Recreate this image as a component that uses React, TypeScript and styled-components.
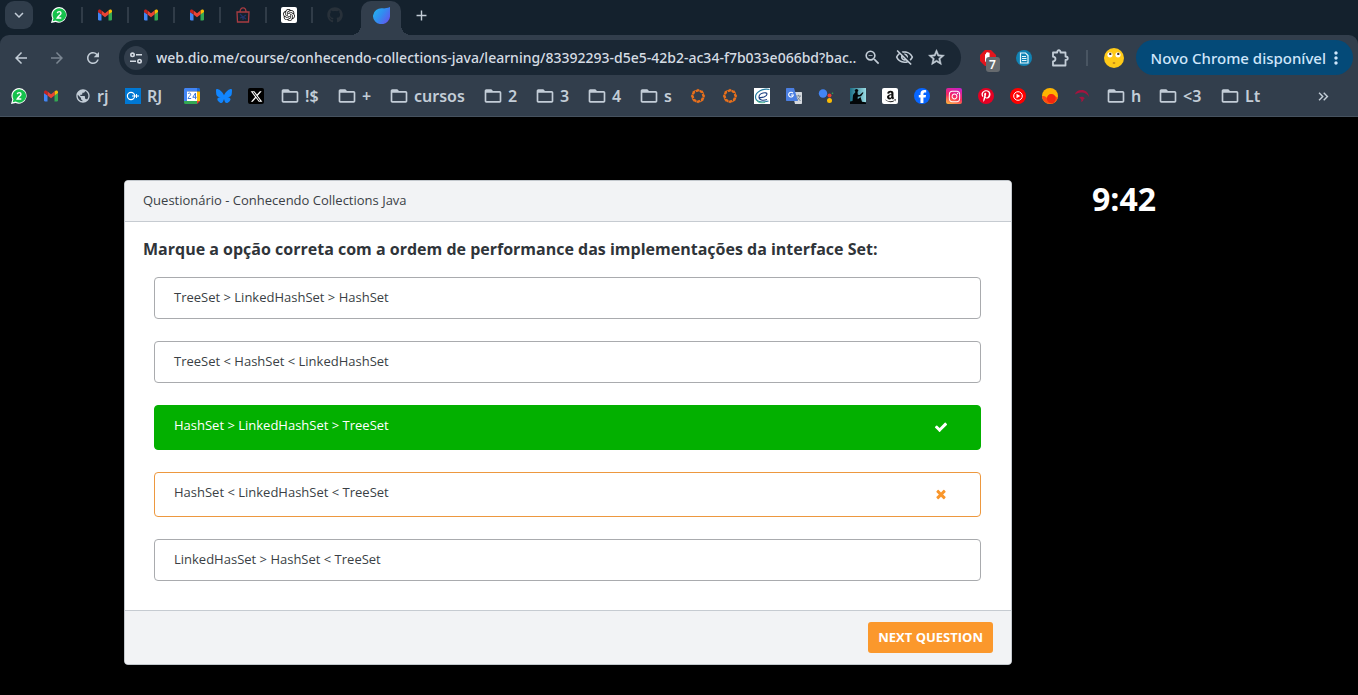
import React from 'react';
import styled, { createGlobalStyle, css } from 'styled-components';
import {
  MdArrowBack, MdArrowForward, MdRefresh, MdZoomOut, MdOutlineVisibilityOff, MdStarOutline,
  MdMoreVert, MdPublic, MdExpandMore, MdFolderOpen, MdAdd, MdKeyboardDoubleArrowRight,
} from 'react-icons/md';
import { FaXTwitter, FaBluesky, FaFacebookF, FaInstagram, FaPinterestP, FaAmazon, FaGithub } from 'react-icons/fa6';
import { SiOpenai } from 'react-icons/si';

const uiFont = `"Noto Sans", "Open Sans", sans-serif`;
const pageFont = `"Open Sans", "Noto Sans", sans-serif`;

const GlobalStyle = createGlobalStyle`
  * { box-sizing: border-box; }
  html, body { margin: 0; background: #000; }
  button, input { font: inherit; color: inherit; }
  svg { display: block; flex: none; }
`;

const Window = styled.div`
  min-height: 100vh;
  background: #000;
`;

/* ---------- browser frame ---------- */

const Browser = styled.header`
  background: #14212d;
  color: #c3cdd7;
  font-family: ${uiFont};
`;

const TabStrip = styled.nav`
  display: flex;
  height: 35px;
  padding: 1px 5px 0;
`;

const plain = css`
  border: 0;
  padding: 0;
  margin: 0;
  background: none;
  display: flex;
  align-items: center;
  justify-content: center;
  cursor: pointer;
`;

const TabSearch = styled.button`
  ${plain}
  width: 28px;
  height: 28px;
  margin-right: 3px;
  border-radius: 9px;
  background: #303d4b;
`;

const Tab = styled.button<{ $last?: boolean }>`
  ${plain}
  width: 46px;
  height: 28px;
  &::after {
    content: '';
    width: 2px;
    height: 16px;
    margin-left: 14px;
    margin-right: -1px;
    background: ${(p) => (p.$last ? 'transparent' : '#303c48')};
  }
  padding-left: 15px;
`;

const ActiveTab = styled.button`
  ${plain}
  position: relative;
  width: 40px;
  height: 34px;
  margin: 0 6px 0 3px;
  padding-bottom: 6px;
  border-radius: 10px 10px 0 0;
  background: #323e4c;
  &::before, &::after {
    content: '';
    position: absolute;
    bottom: 0;
    width: 10px;
    height: 10px;
  }
  &::before {
    right: 100%;
    background: radial-gradient(circle at 0 0, transparent 10px, #323e4c 10px);
  }
  &::after {
    left: 100%;
    background: radial-gradient(circle at 100% 0, transparent 10px, #323e4c 10px);
  }
`;

const NewTab = styled.button`
  ${plain}
  width: 28px;
  height: 28px;
`;

const Toolbar = styled.div`
  display: flex;
  align-items: center;
  height: 45px;
  padding: 0 5px 0 3px;
  background: #323e4c;
  border-radius: 9px 9px 0 0;
`;

const NavButton = styled.button<{ $dim?: boolean }>`
  ${plain}
  width: 36px;
  height: 34px;
  opacity: ${(p) => (p.$dim ? 0.5 : 1)};
`;

const AddressBar = styled.form`
  flex: 1;
  display: flex;
  align-items: center;
  height: 35px;
  margin: 0 9px 0 8px;
  padding: 0 8px 0 5px;
  border-radius: 18px;
  background: #1a2734;
`;

const SiteInfo = styled.button`
  ${plain}
  width: 24px;
  height: 24px;
  border-radius: 50%;
  background: #323e4c;
`;

const Address = styled.input`
  flex: 1;
  min-width: 0;
  height: 28px;
  margin-left: 8px;
  padding: 0;
  border: 0;
  outline: 0;
  background: none;
  font-size: 14px;
  font-weight: 500;
  color: #d5dce3;
`;

const AddressButton = styled.button`
  ${plain}
  width: 32px;
  height: 32px;
`;

const Extension = styled.button`
  ${plain}
  position: relative;
  width: 36px;
  height: 34px;
`;

const Badge = styled.span`
  position: absolute;
  left: 16px;
  top: 16px;
  width: 14px;
  height: 15px;
  border-radius: 3px;
  background: #666a6e;
  color: #fff;
  font-size: 12px;
  font-weight: 600;
  line-height: 15px;
  text-align: center;
`;

const Divider = styled.span`
  width: 2px;
  height: 16px;
  margin: 0 8px;
  background: #495562;
`;

const UpdateButton = styled.button`
  ${plain}
  flex: none;
  height: 35px;
  padding: 0 7px 0 15px;
  margin-left: 4px;
  border-radius: 18px;
  background: #044a78;
  color: #cfe6fb;
  font-size: 15px;
  font-weight: 500;
  white-space: nowrap;
`;

const Bookmarks = styled.nav`
  display: flex;
  align-items: center;
  height: 37px;
  padding: 0 17px 4px 3px;
  background: #323e4c;
  border-bottom: 1px solid #46525f;
`;

const Bookmark = styled.a<{ $label?: number }>`
  flex: none;
  display: flex;
  align-items: center;
  width: ${(p) => 32 + (p.$label ?? 0)}px;
  padding-left: 8px;
  color: inherit;
  font-size: 16px;
  font-weight: 600;
  line-height: 24px;
  text-decoration: none;
  white-space: nowrap;
`;

const BookmarkLabel = styled.span`
  margin-left: 6px;
`;

const FolderSlot = styled.span`
  flex: none;
  display: flex;
  justify-content: center;
  width: 19px;
`;

const Overflow = styled.button`
  ${plain}
  width: 36px;
  height: 28px;
  margin-left: auto;
`;

const Tile = styled.span<{ $bg: string; $fg?: string; $round?: boolean }>`
  flex: none;
  display: flex;
  align-items: center;
  justify-content: center;
  width: 16px;
  height: 16px;
  border-radius: ${(p) => (p.$round ? '50%' : '2px')};
  background: ${(p) => p.$bg};
  color: ${(p) => p.$fg ?? '#fff'};
`;

const Svg = ({ size = 16, box = 16, children }: { size?: number; box?: number; children: React.ReactNode }) => (
  <svg width={size} height={size} viewBox={`0 0 ${box} ${box}`} fill="none" aria-hidden="true">{children}</svg>
);

const WhatsApp = () => (
  <Svg>
    <path d="M8.2 0A7.8 7.8 0 0 0 1.3 11.4L0 16l4.6-1.1A7.8 7.8 0 1 0 8.2 0Z" fill="#fff" />
    <path d="M8.2 1.2a6.7 6.7 0 0 0-5.7 10.1l-.8 3 3-.8A6.7 6.7 0 1 0 8.2 1.2Z" fill="#16c24c" />
    <path d="M6.3 6.1c.2-1 .9-1.5 1.9-1.5s1.8.6 1.8 1.6c0 1.5-2.2 2.5-3.7 4.8h4" stroke="#fff" strokeWidth="1.4" />
  </Svg>
);

const Gmail = () => (
  <Svg>
    <path d="M1 4v8.6c0 .5.4.9 1 .9h2.500V7.600L1 5Z" fill="#4285f4" />
    <path d="M11.500 7.600v5.900H14c.600 0 1-.4 1-.9V4.500Z" fill="#34a853" />
    <path d="M11.500 3.600v4L15 5V4c0-1.500-1.500-2-2.500-1.200Z" fill="#fbbc04" />
    <path d="M4.500 7.600v-4L8 6.200l3.500-2.600v4L8 10.200Z" fill="#ea4335" />
    <path d="M1 4v1l3.500 2.600v-4l-1-.8C2.500 2 1 2.600 1 4Z" fill="#c5221f" />
  </Svg>
);

const Bag = () => (
  <Svg>
    <path d="M2 5h12l-.5 10h-11Z" stroke="#a83c42" strokeWidth="1.300" />
    <path d="M5 5c0-5.500 6-5.500 6 0" stroke="#a83c42" strokeWidth="1.300" />
    <path d="m5 7 3 3 3-2M8 10v3M5 11l3-1 3 2" stroke="#203468" strokeWidth="1.200" />
  </Svg>
);

const DioLogo = () => (
  <Svg size={17}>
    <defs>
      <linearGradient id="dio" x1="0" y1="3" x2="15" y2="13" gradientUnits="userSpaceOnUse">
        <stop stopColor="#24b3ee" />
        <stop offset=".5" stopColor="#318df0" />
        <stop offset="1" stopColor="#6058ed" />
      </linearGradient>
    </defs>
    <path d="M16 0v8.500a8 7.500 0 1 1-7-7.300c1.800.3 3.500 0 7-1.200Z" fill="url(#dio)" />
  </Svg>
);

const Tune = () => (
  <Svg>
    <g stroke="#d4dbe3" strokeWidth="1.600">
      <circle cx="4.500" cy="4.800" r="1.700" />
      <path d="M8 4.800h6M2 11.200h6" />
      <circle cx="11.500" cy="11.200" r="1.700" />
    </g>
  </Svg>
);

const Puzzle = () => (
  <Svg size={20} box={20}>
    <path
      d="M3 4.500h4.200c-.3-3 3.600-3 3.300 0h5v4c3 0 3 3.500 0 3.500v5.500H3v-4.200c3.300-.2 3.300-4.400 0-4.600Z"
      stroke="currentColor"
      strokeWidth="1.800"
      strokeLinejoin="round"
    />
  </Svg>
);

const Outlook = () => (
  <Svg>
    <path d="M0 0h16v16H0Z" fill="#0078d4" />
    <circle cx="6" cy="8" r="3.600" stroke="#fff" strokeWidth="1.200" />
    <path d="M7 8h7M11.500 6v4" stroke="#fff" />
  </Svg>
);

const Calendar = () => (
  <Svg>
    <path d="M1.500 0H13v3.500H3.500V13H0V1.500C0 .6.600 0 1.500 0Z" fill="#4285f4" />
    <path d="M13 0h1.500c1 0 1.500.6 1.500 1.500v2h-3Z" fill="#1967d2" />
    <path d="M13 3.500h3V13h-3Z" fill="#fbbc04" />
    <path d="M0 13h13v3H1.500C.600 16 0 15.400 0 14.500Z" fill="#34a853" />
    <path d="M13 13h3l-3 3Z" fill="#ea4335" />
    <path d="M3 3.500h10V13H3Z" fill="#fff" />
    <path d="M4 6c.3-1.400 2.700-1.300 2.700.3C6.700 7.500 4.300 9 4 10.500h3.200M11.500 11.200V5L8.800 9.300h3.900" stroke="#3d78dc" />
  </Svg>
);

const blades = [0, 45, 90, 135, 180, 225, 270, 315];

const Aperture = () => (
  <Svg>
    <circle cx="8" cy="8" r="5.400" stroke="#e9701c" strokeWidth="2.400" />
    {blades.map((a) => (
      <g key={a} transform={`rotate(${a} 8 8)`}>
        <path d="M6.500 1.500 8 .8l1.500 1.400Z" fill="#e9701c" />
        <path d="M7.200 5 10 2.600" stroke="#323e4c" strokeWidth=".8" />
      </g>
    ))}
  </Svg>
);

const Swirl = () => (
  <Svg>
    <path d="M0 0h16v16H0Z" fill="#fff" />
    <path d="M15.500 1.500C9 0 1.500 4 1.500 9s6 6 13 4" stroke="#247ca0" strokeWidth="1.200" />
    <path d="M5 9.500c4 .5 8-1.500 8-3.500 0-2.500-8-1-8 3 0 3 4 4 8 2.500" stroke="#1d3f82" strokeWidth="1.100" />
    <path d="M2 12c2 3 6 3 9 2.500" stroke="#5bbd91" />
  </Svg>
);

const Translate = () => (
  <Svg>
    <path d="M6 4h9c.600 0 1 .4 1 1v10c0 .6-.4 1-1 1H9Z" fill="#d5d9de" />
    <path d="M1 0h7l4 13H1c-.6 0-1-.4-1-1V1c0-.6.400-1 1-1Z" fill="#4b7fe2" />
    <path d="M7 5.200A2.400 2.400 0 1 0 7.400 7H5" stroke="#fff" strokeWidth="1.100" />
    <path d="M10 8h5M12.500 6.800V8M14 8c-.5 2-2 3.500-3 4M11.500 9.500l3 3.500" stroke="#73818e" strokeWidth=".9" />
  </Svg>
);

const Assistant = () => (
  <Svg>
    <circle cx="5" cy="5.500" r="4.200" fill="#4285f4" />
    <circle cx="11.500" cy="7.500" r="2" fill="#ea4335" />
    <circle cx="11.500" cy="12.500" r="2.500" fill="#fbbc04" />
    <circle cx="14.500" cy="5.200" r=".8" fill="#34a853" />
  </Svg>
);

const Kindle = () => (
  <Svg>
    <defs>
      <linearGradient id="sky" x1="0" y1="0" x2="1" y2="0">
        <stop stopColor="#1c6f85" />
        <stop offset="1" stopColor="#9adce4" />
      </linearGradient>
    </defs>
    <path d="M0 0h16v16H0Z" fill="url(#sky)" />
    <circle cx="6.500" cy="2.600" r="1.700" fill="#020608" />
    <path d="M5.500 4 3 7l-.5 6L0 13.500V16h16v-1.800l-4-.4-1.500-4.800-2.800 2.200V8.800l3.300-.6 2.500-3.400-.8-.6L9.700 7 7.800 6.800 7.500 4Z" fill="#020608" />
  </Svg>
);

const YouTubeMusic = () => (
  <Svg>
    <circle cx="8" cy="8" r="8" fill="#f00" />
    <circle cx="8" cy="8" r="4.300" stroke="#fff" strokeWidth="1" />
    <path d="M6.500 5.700v4.600L10.300 8Z" fill="#fff" />
  </Svg>
);

const Sunset = () => (
  <Svg>
    <circle cx="8" cy="8" r="8" fill="#ffb400" />
    <path d="M0 8c3-.5 4 .8 5 2 1-5 6-5 8-2l2.700 2A8 8 0 0 1 0 8Z" fill="#ff4a12" />
    <path d="M5 10c1-5 6-5 8-2 1.500 2.500 0 6-2 7.400C7.500 16 4.500 13 5 10Z" fill="#f5260e" />
  </Svg>
);

const Arc = () => (
  <Svg>
    <path d="M1 6.500C1.500 3.500 4 2 7.500 2c4 0 7 2.500 7.500 7-2-3.500-5-5-8-4.500C4.500 4.600 3 5.500 1 6.500Z" fill="#a4143e" />
    <path d="M5 9.500c2-1.500 5-1 6 1-1 0-1.500.5-2 2.500l-2 1c1-1.500.5-3.500-2-4.500Z" fill="#a4143e" />
  </Svg>
);

const BlockHand = () => (
  <Svg>
    <path d="M5 0h6l5 5v6l-5 5H5l-5-5V5Z" fill="#e3141c" />
    <path d="M5 8V4.500c0-.8 1-.8 1 0V3c0-.8 1.200-.8 1.200 0v-.5c0-.8 1.200-.8 1.200 0V3c0-.8 1.200-.8 1.200 0v7c0 4-4.600 3.500-4.600 0Z" fill="#fff" />
  </Svg>
);

const DocBadge = () => (
  <Svg>
    <circle cx="8" cy="8" r="8" fill="#1183b4" />
    <path d="M4.500 3h5L12 5.500V13H4.500Z" stroke="#e8f6fb" strokeWidth="1.200" />
    <path d="M6 6.500h4M6 8.500h4.500M6 10.500h4.500" stroke="#e8f6fb" />
  </Svg>
);

const EyeRoll = () => (
  <Svg size={20} box={20}>
    <circle cx="10" cy="10" r="10" fill="#ffca18" />
    <circle cx="6" cy="6.800" r="2.600" fill="#fff" />
    <circle cx="14" cy="6.800" r="2.600" fill="#fff" />
    <circle cx="6.300" cy="5.900" r="1.200" fill="#493525" />
    <circle cx="14.300" cy="5.900" r="1.200" fill="#493525" />
    <path d="M8.800 15h2.400" stroke="#a66918" strokeWidth="1.200" />
  </Svg>
);

const CheckMark = () => (
  <Svg size={14} box={1792}>
    <path fill="currentColor" d="M1671 566q0 40-28 68l-724 724-136 136q-28 28-68 28t-68-28l-136-136-362-362q-28-28-28-68t28-68l136-136q28-28 68-28t68 28l294 295 656-657q28-28 68-28t68 28l136 136q28 28 28 68z" />
  </Svg>
);

const CrossMark = () => (
  <Svg size={14} box={1792}>
    <path fill="currentColor" d="M1490 1322q0 40-28 68l-136 136q-28 28-68 28t-68-28l-294-294-294 294q-28 28-68 28t-68-28l-136-136q-28-28-28-68t28-68l294-294-294-294q-28-28-28-68t28-68l136-136q28-28 68-28t68 28l294 294 294-294q28-28 68-28t68 28l136 136q28 28 28 68t-28 68l-294 294 294 294q28 28 28 68z" />
  </Svg>
);

const tabs = [
  { name: 'WhatsApp', icon: <WhatsApp /> },
  { name: 'Gmail', icon: <Gmail /> },
  { name: 'Gmail', icon: <Gmail /> },
  { name: 'Gmail', icon: <Gmail /> },
  { name: 'Shop', icon: <Bag /> },
  { name: 'ChatGPT', icon: <Tile $bg="#fff" $fg="#111"><SiOpenai size={12} /></Tile> },
  { name: 'GitHub', icon: <FaGithub size={16} color="#28313a" /> },
];

type Mark = { name: string; icon?: React.ReactNode; text?: string; room?: number };

const marks: Mark[] = [
  { name: 'WhatsApp', icon: <WhatsApp /> },
  { name: 'Gmail', icon: <Gmail /> },
  { name: 'rj', icon: <MdPublic size={16} />, text: 'rj', room: 18 },
  { name: 'RJ', icon: <Outlook />, text: 'RJ', room: 27 },
  { name: 'Calendar', icon: <Calendar /> },
  { name: 'Bluesky', icon: <FaBluesky size={16} color="#1185fe" /> },
  { name: 'X', icon: <Tile $bg="#000"><FaXTwitter size={13} /></Tile> },
  { name: '!$', text: '!$', room: 25 },
  { name: '+', text: '+', room: 20 },
  { name: 'cursos', text: 'cursos', room: 62 },
  { name: '2', text: '2', room: 20 },
  { name: '3', text: '3', room: 20 },
  { name: '4', text: '4', room: 20 },
  { name: 's', text: 's', room: 19 },
  { name: 'Aperture', icon: <Aperture /> },
  { name: 'Aperture', icon: <Aperture /> },
  { name: 'Editor', icon: <Swirl /> },
  { name: 'Translate', icon: <Translate /> },
  { name: 'Assistant', icon: <Assistant /> },
  { name: 'Kindle', icon: <Kindle /> },
  { name: 'Amazon', icon: <Tile $bg="#fff" $fg="#111"><FaAmazon size={13} /></Tile> },
  { name: 'Facebook', icon: <Tile $bg="#0866ff" $round><FaFacebookF size={13} /></Tile> },
  { name: 'Instagram', icon: <Tile $bg="linear-gradient(20deg, #ffc13b, #f7275f 45%, #c41fd3)"><FaInstagram size={13} /></Tile> },
  { name: 'Pinterest', icon: <Tile $bg="#e60023" $round><FaPinterestP size={12} /></Tile> },
  { name: 'YouTube Music', icon: <YouTubeMusic /> },
  { name: 'Sunset', icon: <Sunset /> },
  { name: 'Arc', icon: <Arc /> },
  { name: 'h', text: 'h', room: 20 },
  { name: '<3', text: '<3', room: 30 },
  { name: 'Lt', text: 'Lt', room: 24 },
];

/* ---------- quiz page ---------- */

const Page = styled.main`
  display: flex;
  align-items: flex-start;
  max-width: 1110px;
  margin: 0 auto;
  padding: 63px 0 30px;
  font-family: ${pageFont};
  font-size: 13px;
  line-height: 20px;
  color: #3a3f45;
`;

const Card = styled.section`
  width: 80%;
  border: 1px solid #c3c8cd;
  border-radius: 4px;
  background: #fff;
  overflow: hidden;
`;

const CardHeader = styled.header`
  padding: 9px 18px 11px;
  background: #f2f3f5;
  border-bottom: 1px solid #c6cbd1;
`;

const CardBody = styled.div`
  padding: 15px 30px 29px 18px;
`;

const Question = styled.h1`
  margin: 0 0 16px;
  font-size: 16px;
  line-height: 24px;
  font-weight: 700;
  color: #2f3439;
`;

const Options = styled.div`
  display: flex;
  flex-direction: column;
  gap: 22px;
  padding-left: 11px;
`;

type State = 'idle' | 'right' | 'wrong';

const looks = {
  idle: css`min-height: 42px; border-color: #a9abae; background: #fff;`,
  right: css`min-height: 45px; border-color: #03b000; background: #03b000; color: #fff;`,
  wrong: css`min-height: 45px; border-color: #ed983f; background: #fff;`,
};

const Option = styled.button<{ $state: State }>`
  display: flex;
  justify-content: space-between;
  align-items: flex-start;
  width: 100%;
  padding: 9px 32px 9px 19px;
  border: 1px solid;
  border-radius: 4px;
  text-align: left;
  cursor: pointer;
  ${(p) => looks[p.$state]}
`;

const Verdict = styled.span<{ $state: State }>`
  padding-top: 5px;
  color: ${(p) => (p.$state === 'right' ? '#fff' : '#f9962b')};
`;

const CardFooter = styled.footer`
  display: flex;
  justify-content: flex-end;
  padding: 11px 18px;
  background: #f2f3f5;
  border-top: 1px solid #c6cbd1;
`;

const NextButton = styled.button`
  height: 31px;
  padding: 0 10px 2px;
  border: 0;
  border-radius: 3px;
  background: #fb982c;
  color: #fff;
  font-size: 13px;
  font-weight: 700;
  text-transform: uppercase;
  cursor: pointer;
`;

const Timer = styled.time`
  padding-left: 80px;
  color: #fff;
  font-size: 32px;
  line-height: 38px;
  font-weight: 700;
`;

const options: { text: string; state: State }[] = [
  { text: 'TreeSet > LinkedHashSet > HashSet', state: 'idle' },
  { text: 'TreeSet < HashSet < LinkedHashSet', state: 'idle' },
  { text: 'HashSet > LinkedHashSet > TreeSet', state: 'right' },
  { text: 'HashSet < LinkedHashSet < TreeSet', state: 'wrong' },
  { text: 'LinkedHasSet > HashSet < TreeSet', state: 'idle' },
];

export default function App() {
  return (
    <Window>
      <GlobalStyle />
      <Browser>
        <TabStrip aria-label="Tabs">
          <TabSearch aria-label="Search tabs"><MdExpandMore size={18} /></TabSearch>
          {tabs.map((tab, i) => (
            <Tab key={i} aria-label={tab.name} $last={i === tabs.length - 1}>{tab.icon}</Tab>
          ))}
          <ActiveTab aria-label="DIO"><DioLogo /></ActiveTab>
          <NewTab aria-label="New tab"><MdAdd size={17} /></NewTab>
        </TabStrip>
        <Toolbar>
          <NavButton aria-label="Back"><MdArrowBack size={18} /></NavButton>
          <NavButton aria-label="Forward" $dim><MdArrowForward size={18} /></NavButton>
          <NavButton aria-label="Reload"><MdRefresh size={18} /></NavButton>
          <AddressBar onSubmit={(e) => e.preventDefault()}>
            <SiteInfo type="button" aria-label="Site information"><Tune /></SiteInfo>
            <Address
              aria-label="Address"
              defaultValue="web.dio.me/course/conhecendo-collections-java/learning/83392293-d5e5-42b2-ac34-f7b033e066bd?bac…"
            />
            <AddressButton type="button" aria-label="Zoom"><MdZoomOut size={19} /></AddressButton>
            <AddressButton type="button" aria-label="Tracking protection"><MdOutlineVisibilityOff size={19} /></AddressButton>
            <AddressButton type="button" aria-label="Bookmark this page"><MdStarOutline size={19} strokeWidth={0.7} /></AddressButton>
          </AddressBar>
          <Extension aria-label="Blocker"><BlockHand /><Badge>7</Badge></Extension>
          <Extension aria-label="Documents"><DocBadge /></Extension>
          <Extension aria-label="Extensions"><Puzzle /></Extension>
          <Divider />
          <Extension aria-label="Profile"><EyeRoll /></Extension>
          <UpdateButton>Novo Chrome disponível<MdMoreVert size={20} /></UpdateButton>
        </Toolbar>
        <Bookmarks aria-label="Bookmarks">
          {marks.map((m, i) => (
            <Bookmark key={i} href="#" aria-label={m.name} $label={m.room}>
              {m.icon ?? <FolderSlot><MdFolderOpen size={20} /></FolderSlot>}
              {m.text && <BookmarkLabel>{m.text}</BookmarkLabel>}
            </Bookmark>
          ))}
          <Overflow aria-label="More bookmarks"><MdKeyboardDoubleArrowRight size={17} /></Overflow>
        </Bookmarks>
      </Browser>
      <Page>
        <Card>
          <CardHeader>Questionário - Conhecendo Collections Java</CardHeader>
          <CardBody>
            <Question>Marque a opção correta com a ordem de performance das implementações da interface Set:</Question>
            <Options>
              {options.map((o) => (
                <Option key={o.text} $state={o.state}>
                  {o.text}
                  {o.state !== 'idle' && (
                    <Verdict $state={o.state}>{o.state === 'right' ? <CheckMark /> : <CrossMark />}</Verdict>
                  )}
                </Option>
              ))}
            </Options>
          </CardBody>
          <CardFooter><NextButton>Next question</NextButton></CardFooter>
        </Card>
        <Timer>9:42</Timer>
      </Page>
    </Window>
  );
}
